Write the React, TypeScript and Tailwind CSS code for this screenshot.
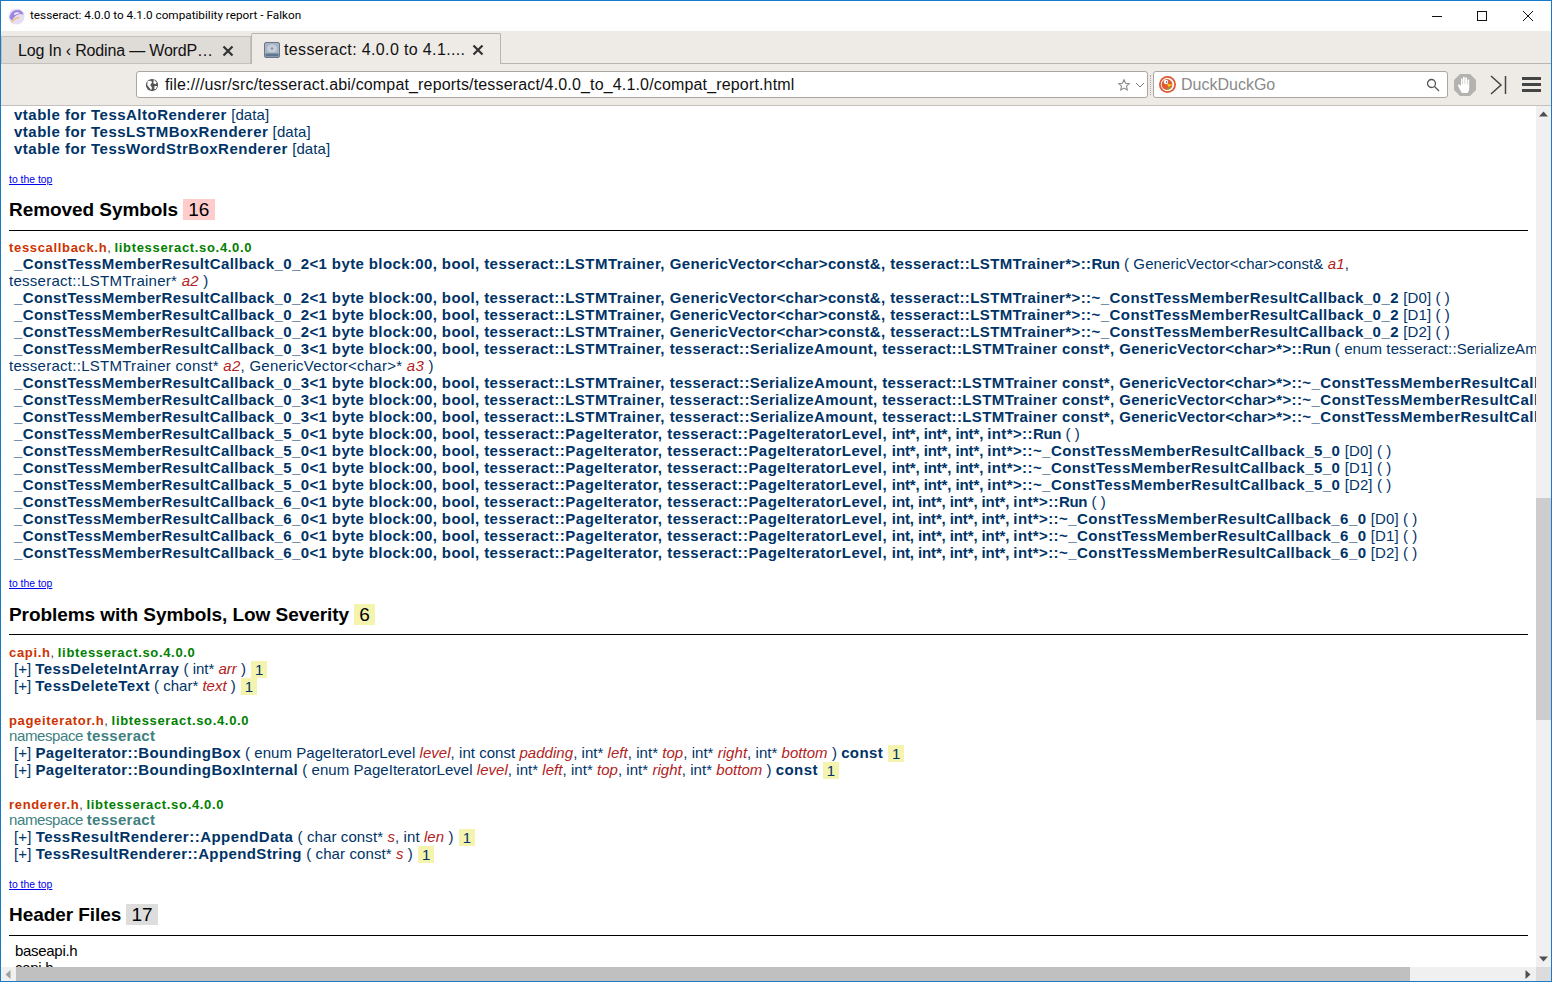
import React from "react";

type Kids = { children: React.ReactNode };
const B = ({ children }: Kids) => <span className="font-bold tracking-[0.385px]">{children}</span>;
const Wide = ({ children }: Kids) => <span className="font-bold tracking-[0.47px]">{children}</span>;
const Wider = ({ children }: Kids) => <span className="font-bold tracking-[0.485px]">{children}</span>;
const Tight = ({ children }: Kids) => <span className="font-bold tracking-[-0.115px]">{children}</span>;
const Slim = ({ children }: Kids) => <span className="font-bold tracking-[0.33px]">{children}</span>;
const Run = () => <span className="font-bold tracking-[-0.3px]">Run</span>;
const P = ({ children }: Kids) => <span className="italic text-[#b22222]">{children}</span>;

function Row({ children, indent = true, track = "tracking-[0.1px]" }: { children: React.ReactNode; indent?: boolean; track?: string }) {
  return <div className={`h-[17px] whitespace-nowrap leading-[15px] text-[#003366] ${track} ${indent ? "pl-[5px]" : ""}`}>{children}</div>;
}

function Top({ className }: { className: string }) {
  return <div className={`h-[14px] text-[10.4px] leading-[14px] ${className}`}><a className="text-[#0000ee] underline">to the top</a></div>;
}

function Heading({ title, count, color, low = false }: { title: string; count: string; color: string; low?: boolean }) {
  return (
    <div className={low ? "mt-[12px]" : "mt-[11px]"}>
      <div className="flex h-[22px] items-center whitespace-nowrap pt-[1px] text-[19px] font-bold leading-[21px] tracking-[-0.06px] text-black">
        <span>{title}</span>
        <span className={`ml-[5px] h-[21px] px-[5.25px] text-[19px] font-normal leading-[21px] ${color}`}>{count}</span>
      </div>
      <div className={`mr-[8px] h-px bg-black ${low ? "mt-[9px]" : "mt-[10px]"}`} />
    </div>
  );
}

function Head({ file, lib }: { file: string; lib: string }) {
  return (
    <div className="h-[17px] whitespace-nowrap text-[13px] font-bold tracking-[0.67px] leading-[17px] text-[#cc3300]">
      {file}<span className="font-normal tracking-normal text-[#444444]">, </span><span className="text-[#008000]">{lib}</span>
    </div>
  );
}

const Ns = () => (
  <div className="h-[16px] whitespace-nowrap leading-[13px] tracking-[-0.4px] text-[#408080]">namespace <span className="font-bold tracking-[0.3px]">tesseract</span></div>
);

const Badge = () => <span className="ml-[5px] inline-block h-[17px] bg-[#f4f4af] px-[4px] align-[-1px] leading-[17px] tracking-normal text-[#003366]">1</span>;

const A = (
  <>
    <B>{"_ConstTessMemberResultCallback_0_2<1 byte block:00, bool, "}</B>
    <Wide>{"tesseract::LSTMTrainer, "}</Wide>
    <B>{"GenericVector<char>const&, tesseract::LSTMTrainer*>::"}</B>
  </>
);
const C = (
  <>
    <B>{"_ConstTessMemberResultCallback_0_3<1 byte block:00, bool, "}</B>
    <Wide>{"tesseract::LSTMTrainer, "}</Wide>
    <B>{"tesseract::SerializeAmount, tesseract::LSTMTrainer const*, "}</B>
    <Slim>{"GenericVector<char>*>::"}</Slim>
  </>
);
const E = (
  <>
    <B>{"_ConstTessMemberResultCallback_5_0<1 byte block:00, bool, "}</B>
    <Wider>{"tesseract::PageIterator, tesseract::PageIteratorLevel, "}</Wider>
    <Tight>{"int*, int*, int*, "}</Tight>
    <B>{"int*>::"}</B>
  </>
);
const G = (
  <>
    <B>{"_ConstTessMemberResultCallback_6_0<1 byte block:00, bool, "}</B>
    <Wider>{"tesseract::PageIterator, tesseract::PageIteratorLevel, "}</Wider>
    <Tight>{"int, int*, int*, int*, "}</Tight>
    <B>{"int*>::"}</B>
  </>
);

function Close({ className }: { className: string }) {
  return <svg width="12" height="12" viewBox="0 0 12 12" className={className}><path d="M1.500 1.500L10.500 10.500M10.500 1.500L1.500 10.500" stroke="#333" strokeWidth="2.200" /></svg>;
}

function Chrome() {
  return (
    <>
      <div className="flex h-[30px] shrink-0 items-center bg-white">
        <svg width="17" height="17" viewBox="0 0 17 17" className="ml-[7px]">
          <circle cx="8.500" cy="8.500" r="8" fill="#e6def6" />
          <path d="M1.500 10 C2 4.500 6 1.500 10.500 2 C13 2.300 15 4 15.500 6.500 L12 6 C9.500 6 6.500 8 4 12.500 Z" fill="#9c86de" />
          <path d="M6 5.500 C8 4.200 10 4 12 5 L9 6 C8 6.200 7 6.500 6 7 Z" fill="#f4f1fb" />
          <path d="M3.500 14.500 C5.500 11.500 8 9.800 11.500 9.500" stroke="#f2c27a" strokeWidth="1.300" fill="none" />
        </svg>
        <span className="ml-[5px] font-['Roboto','Noto_Sans',sans-serif] text-[11.75px] text-black">tesseract: 4.0.0 to 4.1.0 compatibility report - Falkon</span>
        <div className="ml-auto flex items-center">
          <svg width="12" height="12" viewBox="0 0 12 12" className="mr-[33px]"><path d="M1 6.500H11" stroke="#111" strokeWidth="1" /></svg>
          <svg width="12" height="12" viewBox="0 0 12 12" className="mr-[34px]"><rect x="1.500" y="1.500" width="9" height="9" fill="none" stroke="#111" strokeWidth="1" /></svg>
          <svg width="12" height="12" viewBox="0 0 12 12" className="mr-[17px]"><path d="M1 1L11 11M11 1L1 11" stroke="#111" strokeWidth="1" /></svg>
        </div>
      </div>
      <div className="flex h-[33px] shrink-0 items-end border-b border-[#b8b5b0] bg-[#eeebe7] text-[16px] text-[#111]">
        <div className="flex h-[28px] w-[250px] translate-y-px items-center border border-[#c4c1bc] bg-[#dfdbd7] pt-[1px] pl-[16px]">
          <span className="tracking-[-0.17px]">Log In ‹ Rodina — WordP…</span>
          <Close className="ml-[9px]" />
        </div>
        <div className="flex h-[31px] w-[250px] translate-y-px items-center rounded-t-[2px] border border-b-0 border-[#b8b5b0] bg-[#eeebe7] pt-[1px] pl-[11px]">
          <svg width="18" height="18" viewBox="0 0 18 18">
            <rect x="1.500" y="1.500" width="15" height="15" rx="1.500" fill="#aab5c3" stroke="#66788e" />
            <rect x="2.500" y="12.500" width="13" height="3" fill="#5e7590" />
            <ellipse cx="9" cy="7.500" rx="5" ry="4" fill="#c6ced9" />
            <circle cx="9" cy="7.500" r="1.200" fill="#8494a8" />
          </svg>
          <span className="ml-[3px] tracking-[0.36px]">tesseract: 4.0.0 to 4.1....</span>
          <Close className="ml-[7px]" />
        </div>
      </div>
      <div className="flex h-[42px] shrink-0 items-center border-b border-[#c4c1bc] bg-[#eeebe7] pl-[135px] text-[16px]">
        <div className="flex h-[27px] w-[1012px] items-center rounded-[3px] border border-[#aaa7a2] bg-white">
          <svg width="14" height="14" viewBox="0 0 16 16" className="ml-[8px]">
            <circle cx="8" cy="8" r="7" fill="#555" />
            <path d="M3 3.500L7 3L8 5L6 8L8 11L7 14L5 11L2.500 8ZM10 2L13.500 5L12 7L9.500 6ZM11 9L14 9L12 13L10.500 12Z" fill="#fff" />
          </svg>
          <span className="ml-[6px] whitespace-nowrap tracking-[0.16px] text-[#111]">file:///usr/src/tesseract.abi/compat_reports/tesseract/4.0.0_to_4.1.0/compat_report.html</span>
          <svg width="14" height="14" viewBox="0 0 24 24" className="ml-auto" fill="none" stroke="#888" strokeWidth="1.800"><path d="M12 3l2.700 6 6.300.7-4.700 4.400 1.300 6.400-5.600-3.300-5.600 3.300 1.300-6.400L3 9.700l6.300-.7z" /></svg>
          <svg width="10" height="10" viewBox="0 0 10 10" className="mr-[2px] ml-[4px]"><path d="M1 3L5 7L9 3" stroke="#777" fill="none" /></svg>
        </div>
        <div className="mx-[2px] h-[20px] w-0 border-l border-dotted border-[#aaa7a2]" />
        <div className="flex h-[27px] w-[295px] items-center rounded-[3px] border border-[#aaa7a2] bg-white">
          <svg width="17" height="17" viewBox="0 0 17 17" className="ml-[5px]">
            <circle cx="8.500" cy="8.500" r="8.500" fill="#de5833" />
            <circle cx="8.500" cy="8.500" r="6.700" fill="#fff" />
            <circle cx="8" cy="8.500" r="5.400" fill="#de5833" />
            <circle cx="7" cy="6" r="2.200" fill="#fff" />
            <circle cx="7.600" cy="6" r=".8" fill="#2d4f8e" />
            <path d="M8 8L14 8.500L9.500 11Z" fill="#fdd20a" />
            <path d="M8 12L12 11L9 14Z" fill="#65bc46" />
          </svg>
          <span className="ml-[5px] text-[#8a8a8a]">DuckDuckGo</span>
          <svg width="14" height="14" viewBox="0 0 14 14" className="mr-[7px] ml-auto" fill="none" stroke="#555" strokeWidth="1.300"><circle cx="5.500" cy="5.500" r="4" /><path d="M8.500 8.500L13 13" /></svg>
        </div>
        <svg width="24" height="24" viewBox="0 0 24 24" className="ml-[5px]">
          <path d="M7 1H17L23 7V17L17 23H7L1 17V7Z" fill="#b4b2af" />
          <path d="M9 20C7 17 5 13 5 12C6 11 7.500 12 8 13V6C8 5 9.500 5 9.500 6V11H10V4.500C10 3.500 11.700 3.500 11.700 4.500V11H12.200V5C12.200 4 14 4 14 5V11.500H14.500V7C14.500 6 16.200 6 16.200 7V15C16.200 18 15 20 14 20Z" fill="#fff" />
        </svg>
        <svg width="18" height="20" viewBox="0 0 18 20" className="ml-[13px]" fill="none" stroke="#444" strokeWidth="1.500"><path d="M1 1L11 10L1 19" /><path d="M15.500 1V19" /></svg>
        <svg width="19" height="16" viewBox="0 0 19 16" className="ml-[14px]" fill="#444"><rect y="0" width="19" height="3" /><rect y="6" width="19" height="3" /><rect y="12" width="19" height="3" /></svg>
      </div>
    </>
  );
}

function Report() {
  return (
    <div className="min-w-0 flex-1 overflow-hidden pt-[1px] pl-[8px] font-['Liberation_Sans',Arial,sans-serif] text-[15px] leading-[17px]">
      <Row><Wider>vtable for TessAltoRenderer</Wider> [data]</Row>
      <Row><Wider>vtable for TessLSTMBoxRenderer</Wider> [data]</Row>
      <Row><Wider>vtable for TessWordStrBoxRenderer</Wider> [data]</Row>
      <Top className="mt-[15px]" />
      <Heading title="Removed Symbols" count="16" color="bg-[#ffcccc]" />
      <div className="mt-[8px]">
        <Head file="tesscallback.h" lib="libtesseract.so.4.0.0" />
        <Row>{A}<Run /> ( GenericVector&lt;char&gt;const&amp; <P>a1</P>,</Row>
        <Row indent={false} track="tracking-[0.27px]">tesseract::LSTMTrainer* <P>a2</P> )</Row>
        <Row>{A}<Wide>~_ConstTessMemberResultCallback_0_2</Wide> [D0] ( )</Row>
        <Row>{A}<Wide>~_ConstTessMemberResultCallback_0_2</Wide> [D1] ( )</Row>
        <Row>{A}<Wide>~_ConstTessMemberResultCallback_0_2</Wide> [D2] ( )</Row>
        <Row>{C}<Run /> ( enum tesseract::SerializeAmount <P>a1</P>,</Row>
        <Row indent={false} track="tracking-[0.27px]">tesseract::LSTMTrainer const* <P>a2</P>, GenericVector&lt;char&gt;* <P>a3</P> )</Row>
        <Row>{C}<Wide>~_ConstTessMemberResultCallback_0_3</Wide> [D0] ( )</Row>
        <Row>{C}<Wide>~_ConstTessMemberResultCallback_0_3</Wide> [D1] ( )</Row>
        <Row>{C}<Wide>~_ConstTessMemberResultCallback_0_3</Wide> [D2] ( )</Row>
        <Row>{E}<Run /> ( )</Row>
        <Row>{E}<Wide>~_ConstTessMemberResultCallback_5_0</Wide> [D0] ( )</Row>
        <Row>{E}<Wide>~_ConstTessMemberResultCallback_5_0</Wide> [D1] ( )</Row>
        <Row>{E}<Wide>~_ConstTessMemberResultCallback_5_0</Wide> [D2] ( )</Row>
        <Row>{G}<Run /> ( )</Row>
        <Row>{G}<Wide>~_ConstTessMemberResultCallback_6_0</Wide> [D0] ( )</Row>
        <Row>{G}<Wide>~_ConstTessMemberResultCallback_6_0</Wide> [D1] ( )</Row>
        <Row>{G}<Wide>~_ConstTessMemberResultCallback_6_0</Wide> [D2] ( )</Row>
      </div>
      <Top className="mt-[15px]" />
      <Heading title="Problems with Symbols, Low Severity" count="6" color="bg-[#f4f4af]" low />
      <div className="mt-[9px]">
        <Head file="capi.h" lib="libtesseract.so.4.0.0" />
        <Row track="tracking-[0px]">[+] <Wide>TessDeleteIntArray</Wide> ( int* <P>arr</P> )<Badge /></Row>
        <Row track="tracking-[0px]">[+] <Wider>TessDeleteText</Wider> ( char* <P>text</P> )<Badge /></Row>
      </div>
      <div className="mt-[17px]">
        <Head file="pageiterator.h" lib="libtesseract.so.4.0.0" />
        <Ns />
        <Row track="tracking-[0.04px]">[+] <B>PageIterator::BoundingBox</B> ( enum PageIteratorLevel <P>level</P>, int const <P>padding</P>, int* <P>left</P>, int* <P>top</P>, int* <P>right</P>, int* <P>bottom</P> ) <B>const</B><Badge /></Row>
        <Row track="tracking-[0.04px]">[+] <B>PageIterator::BoundingBoxInternal</B> ( enum PageIteratorLevel <P>level</P>, int* <P>left</P>, int* <P>top</P>, int* <P>right</P>, int* <P>bottom</P> ) <B>const</B><Badge /></Row>
      </div>
      <div className="mt-[17px]">
        <Head file="renderer.h" lib="libtesseract.so.4.0.0" />
        <Ns />
        <Row>[+] <Wider>TessResultRenderer::AppendData</Wider> ( char const* <P>s</P>, int <P>len</P> )<Badge /></Row>
        <Row>[+] <B>TessResultRenderer::AppendString</B> ( char const* <P>s</P> )<Badge /></Row>
      </div>
      <Top className="mt-[15px]" />
      <Heading title="Header Files" count="17" color="bg-[#dddddd]" />
      <div className="mt-[6px] pl-[6px] tracking-[-0.3px] text-black">
        <div className="h-[17px]">baseapi.h</div>
        <div className="h-[17px]">capi.h</div>
      </div>
    </div>
  );
}

export default function App() {
  return (
    <div className="flex h-[982px] w-[1552px] flex-col overflow-hidden border border-[#1a7bc9] bg-white font-['Liberation_Sans',Arial,sans-serif]">
      <Chrome />
      <div className="flex min-h-0 flex-1">
        <Report />
        <div className="flex w-[15px] shrink-0 flex-col items-center bg-[#f0f0f0]">
          <svg width="9" height="6" viewBox="0 0 9 6" className="mt-[5px]"><path d="M0 5.500L4.500 0.500L9 5.500Z" fill="#505050" /></svg>
          <div className="mt-[381px] h-[222px] w-full bg-[#cdcdcd]" />
          <svg width="9" height="6" viewBox="0 0 9 6" className="mt-auto mb-[5px]"><path d="M0 0.500L4.500 5.500L9 0.500Z" fill="#505050" /></svg>
        </div>
      </div>
      <div className="flex h-[14px] shrink-0 items-center bg-[#f0f0f0]">
        <svg width="6" height="9" viewBox="0 0 6 9" className="ml-[4px]"><path d="M5.500 0L0.500 4.500L5.500 9Z" fill="#a0a0a0" /></svg>
        <div className="ml-[5px] h-full w-[1394px] bg-[#c0c0c0]" />
        <svg width="6" height="9" viewBox="0 0 6 9" className="ml-[115px]"><path d="M0.500 0L5.500 4.500L0.500 9Z" fill="#505050" /></svg>
        <div className="ml-auto h-full w-[15px] bg-[#dcdcdc]" />
      </div>
    </div>
  );
}
